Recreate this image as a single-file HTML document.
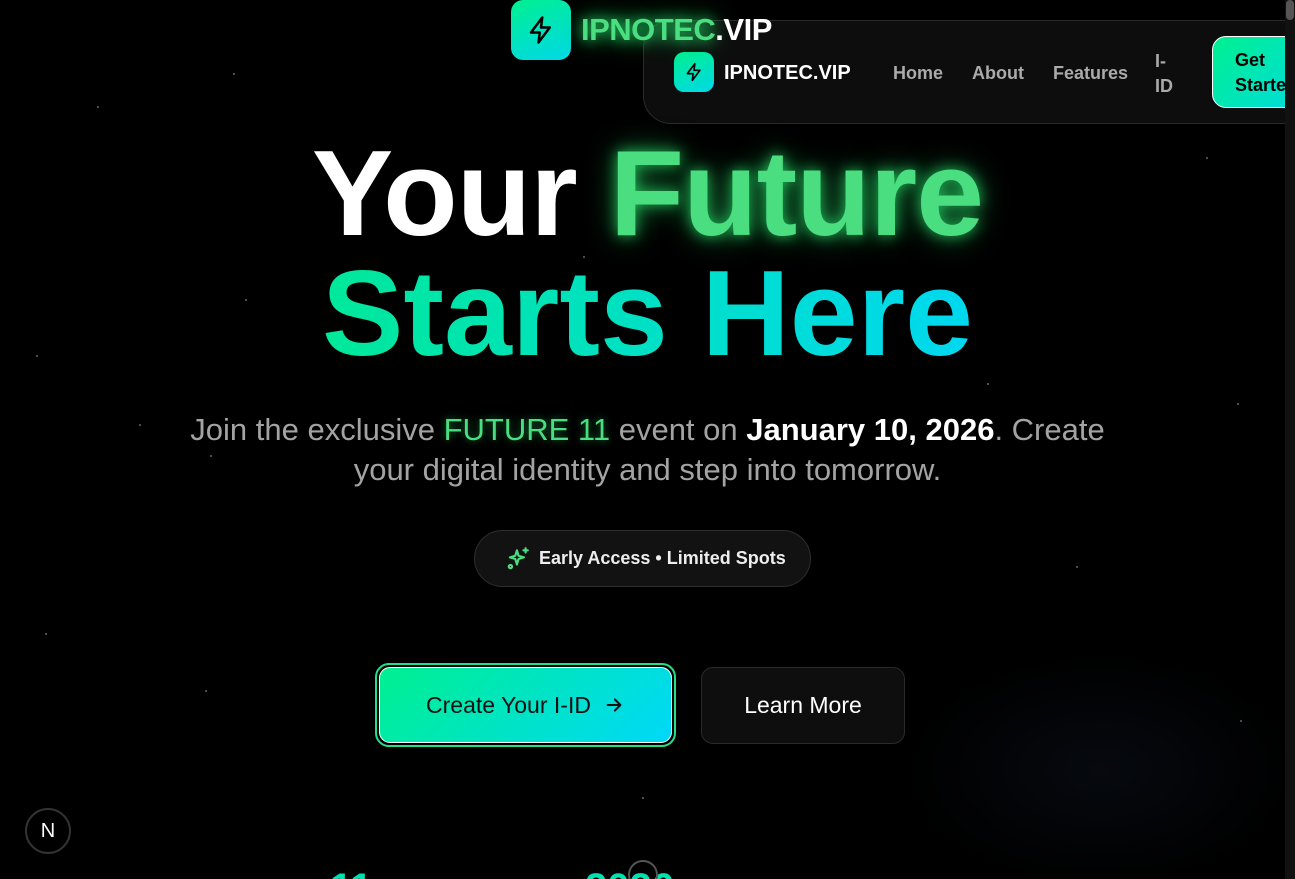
<!DOCTYPE html>
<html><head><meta charset="utf-8"><style>
*{margin:0;padding:0;box-sizing:border-box}
html,body{width:1295px;height:879px;overflow:hidden}
body{background:#000;font-family:"Liberation Sans",sans-serif;position:relative;color:#fff}
.star{position:absolute;width:2px;height:2px;border-radius:50%;background:#666}
.logoico{position:absolute;border-radius:10px;background:linear-gradient(160deg,#00f090,#00d8e8);display:flex;align-items:center;justify-content:center}
.nav{position:absolute;left:643px;top:20px;width:680px;height:104px;background:#0d0d0d;border:1px solid #2a2a2a;border-radius:28px}
.h{position:absolute;left:0;width:1295px;text-align:center;font-weight:bold;font-size:122px;line-height:122px}
</style></head><body>
<div class="star" style="left:97px;top:106px"></div><div class="star" style="left:233px;top:73px"></div><div class="star" style="left:36px;top:355px"></div><div class="star" style="left:139px;top:424px"></div><div class="star" style="left:210px;top:455px"></div><div class="star" style="left:45px;top:633px"></div><div class="star" style="left:205px;top:690px"></div><div class="star" style="left:642px;top:797px"></div><div class="star" style="left:1237px;top:403px"></div><div class="star" style="left:1206px;top:157px"></div><div class="star" style="left:1240px;top:720px"></div><div class="star" style="left:987px;top:383px"></div><div class="star" style="left:1076px;top:566px"></div><div class="star" style="left:245px;top:299px"></div><div class="star" style="left:583px;top:256px"></div>
<div style="position:absolute;left:900px;top:650px;width:400px;height:240px;background:radial-gradient(ellipse at center,rgba(20,30,50,.3),transparent 70%)"></div>

<div class="nav">
<div class="logoico" style="left:30px;top:31px;width:40px;height:40px">
<svg width="20" height="20" viewBox="0 0 24 24" fill="none" stroke="#000" stroke-width="2" stroke-linejoin="round"><path d="M13 2L4 14h7l-1 8 9-12h-7l1-8z"/></svg></div>
<div style="position:absolute;left:80px;top:41px;font-size:20px;font-weight:bold">IPNOTEC.VIP</div>
<div style="position:absolute;left:249px;top:42px;font-size:18px;font-weight:bold;color:#aaa">Home</div>
<div style="position:absolute;left:328px;top:42px;font-size:18px;font-weight:bold;color:#aaa">About</div>
<div style="position:absolute;left:409px;top:42px;font-size:18px;font-weight:bold;color:#aaa">Features</div>
<div style="position:absolute;left:511px;top:28px;font-size:18px;font-weight:bold;color:#aaa;line-height:25px">I-<br>ID</div>
<div style="position:absolute;left:568px;top:15px;width:120px;height:72px;border-radius:14px;background:linear-gradient(135deg,#00f090,#00d8e8);border:1px solid #fff;color:#000;font-size:18px;font-weight:bold;line-height:25px;padding:11px 0 0 22px">Get<br>Started</div>
</div>

<div class="logoico" style="left:511px;top:0;width:60px;height:60px;border-radius:12px;z-index:2">
<svg width="30" height="30" viewBox="0 0 24 24" fill="none" stroke="#000" stroke-width="2" stroke-linejoin="round"><path d="M13 2L4 14h7l-1 8 9-12h-7l1-8z"/></svg></div>
<div style="position:absolute;left:581px;top:12px;font-size:31px;font-weight:bold;letter-spacing:-0.5px;z-index:2"><span style="color:#4ade80;text-shadow:0 0 12px #22c55e,0 0 24px #22c55e">IPNOTEC</span>.VIP</div>

<div style="position:absolute;left:1285px;top:0;width:10px;height:879px;background:#111"></div>
<div style="position:absolute;left:1286px;top:0;width:8px;height:20px;background:#555;border-radius:4px"></div>

<div class="h" style="top:132px;letter-spacing:-1px"><span>Your </span><span style="color:#4ade80;text-shadow:0 0 14px rgba(34,197,94,.9),0 0 30px rgba(34,197,94,.6)">Future</span></div>
<div class="h" style="top:252px;letter-spacing:0px"><span style="background:linear-gradient(90deg,#00e89a,#00d8f0);-webkit-background-clip:text;background-clip:text;color:transparent">Starts Here</span></div>

<div style="position:absolute;left:0;width:1295px;top:410px;text-align:center;font-size:31px;line-height:40px;color:#a3a3a3">Join the exclusive <span style="color:#4ade80;text-shadow:0 0 8px rgba(34,197,94,.6)">FUTURE 11</span> event on <b style="color:#fff">January 10, 2026</b>. Create<br>your digital identity and step into tomorrow.</div>

<div style="position:absolute;left:474px;top:530px;width:337px;height:57px;border-radius:29px;background:#121212;border:1px solid #2e2e2e;display:flex;align-items:center;padding-left:30px;font-size:18px;font-weight:bold;color:#eee">
<svg width="26" height="26" viewBox="0 0 24 24" fill="none" stroke="#4ade80" stroke-width="2" stroke-linecap="round" stroke-linejoin="round" style="margin-right:8px"><path d="M11 4l1.5 5 5 1.5-5 1.5L11 17l-1.5-5L4.5 10.5l5-1.5z"/><path d="M19 2v4M17 4h4"/><circle cx="5" cy="19" r="1.5"/></svg>Early Access • Limited Spots</div>

<div style="position:absolute;left:375px;top:663px;width:301px;height:84px;border-radius:14px;border:2px solid #22e08a;padding:2px">
<div style="width:100%;height:100%;border-radius:11px;border:1px solid #fff;background:linear-gradient(135deg,#00f090,#00d8f8);display:flex;align-items:center;justify-content:center;color:#111;font-size:23px;gap:12px">Create Your I-ID <svg width="22" height="22" viewBox="0 0 24 24" fill="none" stroke="#111" stroke-width="2.2" stroke-linecap="round" stroke-linejoin="round"><path d="M5 12h14M13 6l6 6-6 6"/></svg></div></div>
<div style="position:absolute;left:701px;top:667px;width:204px;height:77px;border-radius:12px;background:#0e0e0e;border:1px solid #2a2a2a;display:flex;align-items:center;justify-content:center;font-size:23px">Learn More</div>

<div style="position:absolute;left:25px;top:808px;width:46px;height:46px;border-radius:50%;background:#000;border:2px solid #333;display:flex;align-items:center;justify-content:center;font-size:20px">N</div>
<div style="position:absolute;left:330px;top:866px;font-size:40px;font-weight:bold;color:#00e0b0">11</div>
<div style="position:absolute;left:585px;top:866px;font-size:40px;font-weight:bold;color:#00e0b0">2026</div>
<div style="position:absolute;left:628px;top:860px;width:30px;height:30px;border-radius:50%;border:2px solid #555"></div>
</body></html>
